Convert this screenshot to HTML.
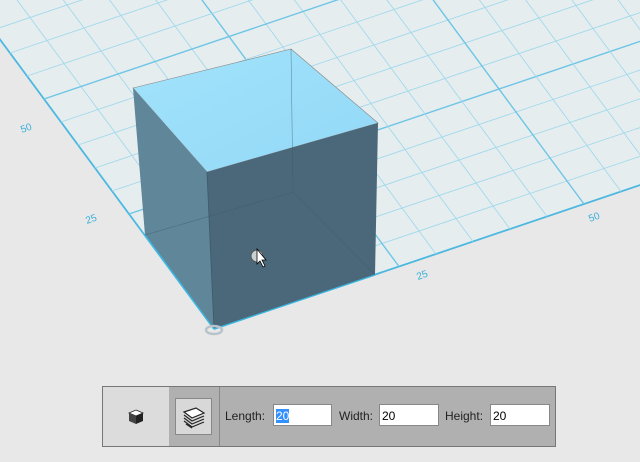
<!DOCTYPE html>
<html><head><style>
body{margin:0;width:640px;height:462px;overflow:hidden;background:#e8e8e8;font-family:"Liberation Sans",sans-serif;}
#bar{position:absolute;left:102px;top:386px;width:452px;height:59px;border:1px solid #777;background:#b0b0b0;}
#c1{position:absolute;left:0;top:0;width:66px;height:59px;background:#dcdcdc;}
#btn{position:absolute;left:72px;top:11px;width:35px;height:35px;background:#d8d8d8;border:1px solid #888;}
#div{position:absolute;left:116px;top:0;width:1px;height:59px;background:#888;}
.l{position:absolute;top:22px;font-size:12px;color:#222;}
.i{position:absolute;top:17px;height:22px;background:#fff;border:1px solid #888;box-sizing:border-box;font-size:12px;padding:4px 2px;color:#000;}
</style></head><body>
<svg width="640" height="462" style="position:absolute;left:0;top:0">
<defs>
<linearGradient id="tg" x1="0" y1="0" x2="1" y2="1"><stop offset="0" stop-color="#a2e3fb"/><stop offset="1" stop-color="#92d8f7"/></linearGradient></defs>
<g transform="matrix(7.4,-2.5,-3.4,-4.6,214,329)">
<polygon points="0,0 200,0 200,200 0,200" fill="#e6edef"/>
<g id="g"></g>
</g>
<polygon points="133,88 291,49 378,123 207,172" fill="url(#tg)" stroke="#888" stroke-width="0.6"/>
<polygon points="133,88 207,172 214,329 145,235" fill="#5f8699"/>
<polygon points="207,172 378,123 375,275 214,329" fill="#4a6879"/>
<g stroke="#3e5a68" stroke-width="0.6" fill="none" opacity="0.6"><line x1="291" y1="49" x2="293" y2="192"/><line x1="145" y1="235" x2="293" y2="192"/><line x1="293" y1="192" x2="375" y2="275"/></g>
<line x1="207" y1="172" x2="214" y2="329" stroke="#3e5a68" stroke-width="0.8"/>
<line x1="214" y1="329" x2="375" y2="275" stroke="#3ab7e0" stroke-width="1.2"/>
<line x1="214" y1="329" x2="145" y2="235" stroke="#3ab7e0" stroke-width="1.2"/>
<ellipse cx="214" cy="330" rx="8" ry="4" fill="none" stroke="#b8c4cc" stroke-width="2.5"/>
<circle cx="257" cy="256" r="6" fill="#c8d0d4" stroke="#555"/>
<path d="M257,249 L257,264 L260,261 L263,267 L265,266 L262,260 L266,260 Z" fill="#fff" stroke="#000" stroke-width="0.8"/>
<g fill="#3aaed8" font-size="10">
<text x="418" y="280" transform="rotate(-20 418 280)">25</text>
<text x="590" y="222" transform="rotate(-20 590 222)">50</text>
<text x="87" y="224" transform="rotate(-20 87 224)">25</text>
<text x="22" y="133" transform="rotate(-20 22 133)">50</text>
</g>
</svg>
<div id="bar"><div id="c1">
<svg style="position:absolute;left:25px;top:22px" width="16" height="16" viewBox="0 0 16 16"><polygon points="8,1 15,4 8,7 1,4" fill="#fff" stroke="#222" stroke-width="0.8"/><polygon points="1,4 8,7 8,15 1,12" fill="#444"/><polygon points="8,7 15,4 15,12 8,15" fill="#222"/></svg></div>
<div id="btn"><svg width="35" height="35" viewBox="0 0 35 35"><g fill="none" stroke="#222" stroke-width="1.2"><path d="M8,13 L20,9 L28,14 L16,19 Z" fill="#fff"/><path d="M8,16 L16,22 L28,17"/><path d="M8,19 L16,25 L28,20"/><path d="M8,22 L16,28 L28,23"/><path d="M10,25 L16,29"/></g></svg></div>
<div id="div"></div>
<span class="l" style="left:122px">Length:</span>
<div class="i" style="left:170px;width:59px"><span style="background:#3390ff;color:#fff">20</span></div>
<span class="l" style="left:236px">Width:</span>
<div class="i" style="left:276px;width:60px">20</div>
<span class="l" style="left:342px">Height:</span>
<div class="i" style="left:387px;width:60px">20</div>
</div>
<script>
var g=document.getElementById('g'),s='';
for(var i=0;i<=40;i++){var k=i*5;var m=(i%5==0);var w=k==0?1.8:(m?1.4:0.9);var c=k==0?'#4cb8e0':(m?'#6ec5e6':'#a2d9ec');
s+='<line x1="'+k+'" y1="0" x2="'+k+'" y2="200" stroke="'+c+'" stroke-width="'+w+'" vector-effect="non-scaling-stroke"/>';
s+='<line x1="0" y1="'+k+'" x2="200" y2="'+k+'" stroke="'+c+'" stroke-width="'+w+'" vector-effect="non-scaling-stroke"/>';}
g.innerHTML=s;
</script>
</body></html>
